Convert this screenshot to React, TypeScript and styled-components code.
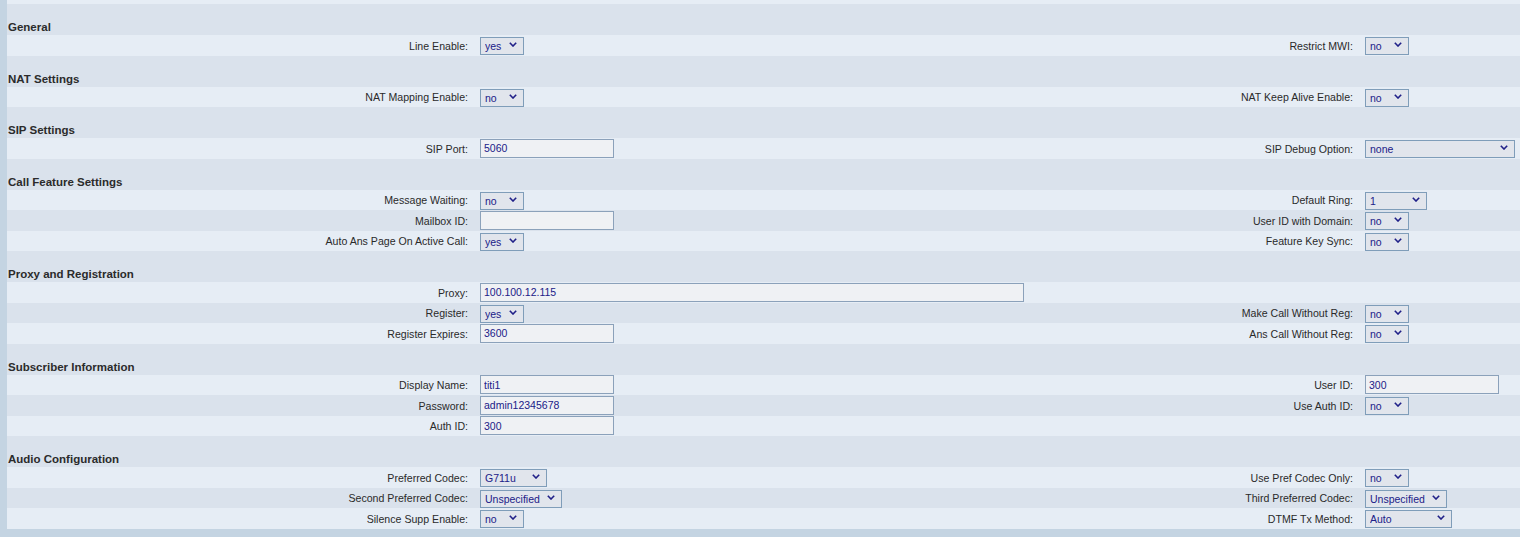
import React from "react";
import styled, { createGlobalStyle } from "styled-components";

const GlobalStyle = createGlobalStyle`
  html, body { margin: 0; padding: 0; background: #c4d4e2; }
  body { font-family: "Liberation Sans", Arial, sans-serif; }
  * { box-sizing: border-box; }
`;

const Page = styled.div`
  width: 1520px;
  height: 537px;
  overflow: hidden;
  background: #c4d4e2;
  padding-left: 7px;
`;

const TopFill = styled.div`
  height: 4px;
  background: #e6edf5;
`;

const SectionHeader = styled.div`
  height: 31px;
  background: #dae2ec;
  display: flex;
  align-items: flex-end;
  padding: 0 0 1px 1px;
  font-size: 11.5px;
  font-weight: bold;
  color: #2b2b2b;
  line-height: 13px;
`;

const Row = styled.div<{ $alt: boolean }>`
  height: 20.5px;
  background: ${(p) => (p.$alt ? "#dae2ec" : "#e6edf5")};
  display: grid;
  grid-template-columns: 469px 554px 331px 1fr;
  align-items: center;
`;

const Label = styled.div`
  text-align: right;
  padding: 1px 8px 0 0;
  font-size: 10.6px;
  color: #2a2a2a;
  white-space: nowrap;
`;

const Value = styled.div`
  padding-left: 4px;
  display: flex;
  align-items: center;
`;

const TextInput = styled.input<{ $w: number }>`
  width: ${(p) => p.$w}px;
  height: 19px;
  border: 1px solid #8ba1ba;
  background: #eff1f4;
  font-family: "Liberation Sans", Arial, sans-serif;
  font-size: 10.5px;
  color: #202088;
  padding: 0 0 0 3px;
  margin: 0;
  outline: none;
`;

const SelectWrap = styled.div<{ $w: number }>`
  position: relative;
  width: ${(p) => p.$w}px;
  height: 18px;
`;

const NativeSelect = styled.select`
  appearance: none;
  -webkit-appearance: none;
  width: 100%;
  height: 100%;
  border: 1px solid #7f9db9;
  background: #e1e5ec;
  font-family: "Liberation Sans", Arial, sans-serif;
  font-size: 10.5px;
  color: #202088;
  padding: 0 0 0 4px;
  margin: 0;
  border-radius: 0;
  outline: none;
`;

const Chevron = styled.svg`
  position: absolute;
  right: 7px;
  top: 6px;
  pointer-events: none;
`;

type Ctl =
  | { kind: "sel"; v: string; w: number }
  | { kind: "inp"; v: string; w: number }
  | null;

const sel = (v: string, w = 44): Ctl => ({ kind: "sel", v, w });
const inp = (v: string, w = 134): Ctl => ({ kind: "inp", v, w });

type RowDef = [string, Ctl, string, Ctl];

const sections: { title: string; rows: RowDef[] }[] = [
  { title: "General", rows: [["Line Enable:", sel("yes"), "Restrict MWI:", sel("no")]] },
  {
    title: "NAT Settings",
    rows: [["NAT Mapping Enable:", sel("no"), "NAT Keep Alive Enable:", sel("no")]],
  },
  {
    title: "SIP Settings",
    rows: [["SIP Port:", inp("5060"), "SIP Debug Option:", sel("none", 150)]],
  },
  {
    title: "Call Feature Settings",
    rows: [
      ["Message Waiting:", sel("no"), "Default Ring:", sel("1", 62)],
      ["Mailbox ID:", inp(""), "User ID with Domain:", sel("no")],
      ["Auto Ans Page On Active Call:", sel("yes"), "Feature Key Sync:", sel("no")],
    ],
  },
  {
    title: "Proxy and Registration",
    rows: [
      ["Proxy:", inp("100.100.12.115", 544), "", null],
      ["Register:", sel("yes"), "Make Call Without Reg:", sel("no")],
      ["Register Expires:", inp("3600"), "Ans Call Without Reg:", sel("no")],
    ],
  },
  {
    title: "Subscriber Information",
    rows: [
      ["Display Name:", inp("titi1"), "User ID:", inp("300")],
      ["Password:", inp("admin12345678"), "Use Auth ID:", sel("no")],
      ["Auth ID:", inp("300"), "", null],
    ],
  },
  {
    title: "Audio Configuration",
    rows: [
      ["Preferred Codec:", sel("G711u", 67), "Use Pref Codec Only:", sel("no")],
      ["Second Preferred Codec:", sel("Unspecified", 82), "Third Preferred Codec:", sel("Unspecified", 82)],
      ["Silence Supp Enable:", sel("no"), "DTMF Tx Method:", sel("Auto", 87)],
    ],
  },
];

function Control({ c }: { c: Ctl }) {
  if (!c) return null;
  if (c.kind === "inp") {
    return <TextInput $w={c.w} type="text" defaultValue={c.v} />;
  }
  return (
    <SelectWrap $w={c.w}>
      <NativeSelect defaultValue={c.v}>
        <option value={c.v}>{c.v}</option>
      </NativeSelect>
      <Chevron width="8" height="5" viewBox="0 0 8 5">
        <path d="M0.8 0.8 L4 4 L7.2 0.8" fill="none" stroke="#202088" strokeWidth="1.6" />
      </Chevron>
    </SelectWrap>
  );
}

export default function App() {
  return (
    <Page>
      <GlobalStyle />
      <TopFill />
      {sections.map((s) => (
        <React.Fragment key={s.title}>
          <SectionHeader>{s.title}</SectionHeader>
          {s.rows.map((r, i) => (
            <Row key={i} $alt={i % 2 === 1}>
              <Label>{r[0]}</Label>
              <Value>
                <Control c={r[1]} />
              </Value>
              <Label>{r[2]}</Label>
              <Value>
                <Control c={r[3]} />
              </Value>
            </Row>
          ))}
        </React.Fragment>
      ))}
    </Page>
  );
}
